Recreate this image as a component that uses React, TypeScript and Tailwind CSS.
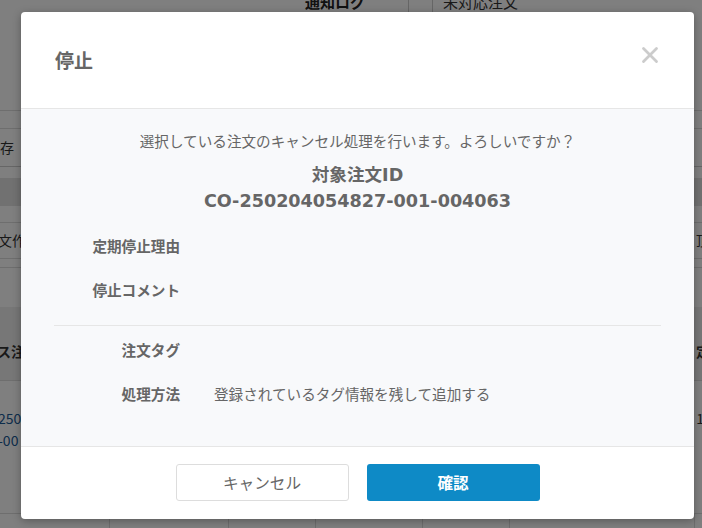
import React from "react";
import { X } from "lucide-react";

const jp = "font-['Noto_Sans_CJK_JP','Noto_Sans',sans-serif]";

function BackgroundPage() {
  return (
    <div className={`w-[702px] h-[528px] overflow-hidden bg-white text-[#333] ${jp}`}>
      {/* top toolbar row */}
      <div className="h-[110px] flex">
        <div className="w-[408px] flex justify-end pr-[43px]">
          <span className="-mt-[9px] text-[15px] font-bold text-[#222]">通知ログ</span>
        </div>
        <div className="w-[25px] h-[18px] border-x border-[#ccc]" />
        <span className="-mt-[9px] ml-[10px] text-[15px] text-[#333]">未対応注文</span>
      </div>
      <div className="h-[18px] border-t border-[#ddd]" />
      <div className="h-[38px] border-t border-[#ddd] flex items-center justify-between">
        <span className="-ml-[14px] text-[14px]">保存</span>
      </div>
      <div className="h-[12px] border-t border-[#ccc]" />
      <div className="h-[28px] bg-[#e2e2e2]" />
      <div className="h-[16px]" />
      <div className="h-[36px] border-t border-[#ddd] flex items-center justify-between">
        <span className="-ml-[2px] text-[14px]">文作</span>
        <span className="-mr-[8px] text-[14px]">頂</span>
      </div>
      <div className="h-[9px] border-t border-[#ddd]" />
      <div className="h-[40px] border-t border-[#ddd]" />
      <div className="h-[73px] bg-[#eeeeee] flex items-end justify-between pb-[18px]">
        <span className="-ml-[3px] text-[14px] font-bold">ス注</span>
        <span className="-mr-[8px] text-[14px] font-bold">定</span>
      </div>
      <div className="h-[133px] border-t border-[#ddd] flex justify-between pt-[26px]">
        <div className="flex flex-col text-[14px] leading-[22px] text-[#1a5a96] -ml-[2px]">
          <span>250</span>
          <span>-00</span>
        </div>
        <span className="-mr-[2px] text-[14px] leading-[22px]">1</span>
      </div>
      <div className="h-[20px] border-t border-[#ddd] flex">
        <div className="w-[110px] border-r border-[#ddd]" />
        <div className="w-[119px] border-r border-[#ddd]" />
        <div className="w-[87px] border-r border-[#ddd]" />
        <div className="w-[107px] border-r border-[#ddd]" />
        <div className="w-[87px] border-r border-[#ddd]" />
        <div className="w-[185px] border-r border-[#ddd]" />
      </div>
    </div>
  );
}

function Row({ label, value }: { label: string; value?: string }) {
  return (
    <div className="h-[44px] flex items-center">
      <div className="w-[126px] text-right text-[14.6px] font-bold text-[#666]">{label}</div>
      {value && <div className="ml-[34px] text-[14.6px] text-[#666]">{value}</div>}
    </div>
  );
}

export default function App() {
  return (
    <div className="relative w-[702px] h-[528px] overflow-hidden">
      <BackgroundPage />
      <div className="absolute inset-0 bg-black/50" />

      {/* modal */}
      <div
        className={`absolute left-[21px] top-[12px] w-[673px] h-[507px] bg-white rounded-[4px] shadow-[0_2px_8px_rgba(0,0,0,0.3)] overflow-hidden flex flex-col ${jp}`}
      >
        <div className="h-[97px] flex items-center justify-between pl-[34px] pr-[31px] border-b border-[#e6e6e6]">
          <h2 className="text-[19px] font-bold text-[#666]">停止</h2>
          <X className="w-[26px] h-[26px] text-[#cccccc] -mt-[10px]" strokeWidth={2.6} />
        </div>

        <div className="flex-1 bg-[#f8f9fb] px-[33px] pt-[22px] text-[#666]">
          <p className="text-center text-[14.6px] leading-[20px]">
            選択している注文のキャンセル処理を行います。よろしいですか？
          </p>
          <div className="mt-[11px] text-center font-bold text-[17.6px] leading-[26px] font-['DejaVu_Sans','Noto_Sans_CJK_JP',sans-serif] text-[#666]">
            <div>対象注文ID</div>
            <div>CO-250204054827-001-004063</div>
          </div>

          <div className="mt-[10px]">
            <Row label="定期停止理由" />
            <Row label="停止コメント" />
          </div>
          <div className="mt-[13px] border-t border-[#e6e6e6]" />
          <div className="mt-[2px]">
            <Row label="注文タグ" />
            <Row label="処理方法" value="登録されているタグ情報を残して追加する" />
          </div>
        </div>

        <div className="h-[73px] border-t border-[#e6e6e6] flex justify-center gap-[18px] pt-[17px]">
          <button className="w-[173px] h-[37px] rounded-[3px] border border-[#dddddd] bg-white text-[15.6px] text-[#666]">
            キャンセル
          </button>
          <button className="w-[173px] h-[37px] rounded-[3px] bg-[#0e8ac6] text-[15.6px] font-bold text-white">
            確認
          </button>
        </div>
      </div>
    </div>
  );
}
